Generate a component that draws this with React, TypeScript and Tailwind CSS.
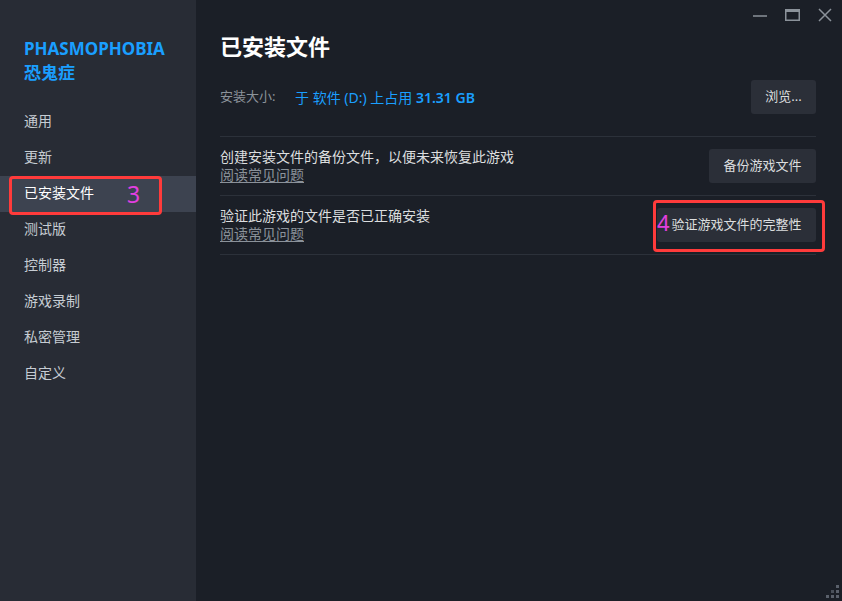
import React from 'react'

const navItems = ['通用', '更新', '已安装文件', '测试版', '控制器', '游戏录制', '私密管理', '自定义']

const font = { fontFamily: '"Noto Sans", "Noto Sans CJK SC", sans-serif' }

function FileRow({
  text,
  button,
  marker,
}: {
  text: string
  button: string
  marker?: boolean
}) {
  return (
    <div className="flex items-center justify-between border-b border-[#2c313a] h-[59px]">
      <div className="flex flex-col">
        <span className="text-[14px] leading-[18px] text-[#dcdedf]">{text}</span>
        <span className="text-[14px] leading-[18px] text-[#8b929a] underline underline-offset-2">
          阅读常见问题
        </span>
      </div>
      <div className="relative">
        <button className="h-[34px] px-[14.5px] rounded-[3px] bg-[#2b2f38] text-[13px] text-[#dcdedf]">
          {button}
        </button>
        {marker && (
          <>
            <div className="absolute -left-[4px] -top-[8px] w-[172px] h-[52px] border-[3px] border-[#ff3b3b] rounded-[4px]" />
            <span className="absolute left-0 top-[1px] text-[22px] leading-[26px] text-[#e23fe0]">4</span>
          </>
        )}
      </div>
    </div>
  )
}

export default function App() {
  return (
    <div className="flex w-[842px] h-[601px] bg-[#1b1f27] overflow-hidden" style={font}>
      {/* Sidebar */}
      <aside className="w-[196px] shrink-0 bg-[#282c35] pt-[37px]">
        <div className="px-6 text-[#1a9fff] font-bold text-[17px] leading-[24px]">
          <div>PHASMOPHOBIA</div>
          <div>恐鬼症</div>
        </div>
        <nav className="mt-[19px] flex flex-col">
          {navItems.map((item) => {
            const active = item === '已安装文件'
            return (
              <div
                key={item}
                className={`relative h-9 flex items-center px-6 text-[14px] leading-[18px] ${
                  active ? 'bg-[#3d4350] text-white' : 'text-[#c6ccd3]'
                }`}
              >
                <span className="-mt-[2px]">{item}</span>
                {active && (
                  <>
                    <div className="absolute left-[9px] top-0 w-[153px] h-[39px] border-[3px] border-[#ff3b3b] rounded-[4px]" />
                    <span className="absolute left-[127px] top-[5px] text-[23px] leading-[26px] text-[#e23fe0]">3</span>
                  </>
                )}
              </div>
            )
          })}
        </nav>
      </aside>

      {/* Main */}
      <main className="relative flex-1 flex flex-col pl-6 pr-[26px]">
        {/* window controls */}
        <div className="absolute top-[8px] right-[10px] flex items-center gap-[18px] text-[#8b929a]">
          <svg width="14" height="14" viewBox="0 0 14 14">
            <line x1="0" y1="8" x2="14" y2="8" stroke="currentColor" strokeWidth="1.5" />
          </svg>
          <svg width="15" height="14" viewBox="0 0 15 14">
            <rect x="0.75" y="1.75" width="13.5" height="10.5" fill="none" stroke="currentColor" strokeWidth="1.5" />
            <line x1="0" y1="3" x2="15" y2="3" stroke="currentColor" strokeWidth="2" />
          </svg>
          <svg width="14" height="14" viewBox="0 0 14 14">
            <path d="M1 1 L13 13 M13 1 L1 13" stroke="currentColor" strokeWidth="1.5" />
          </svg>
        </div>

        <h1 className="mt-[31px] text-[22px] leading-[30px] font-bold text-white">已安装文件</h1>

        <div className="mt-[19px] flex items-center justify-between pb-[22px] border-b border-[#2c313a]">
          <div className="flex items-center">
            <span className="text-[13px] text-[#8b929a] w-[75px]">安装大小:</span>
            <span className="text-[14px] text-[#1a9fff]">
              于 软件 (D:) 上占用 <span className="font-semibold">31.31 GB</span>
            </span>
          </div>
          <button className="h-[34px] w-[65px] rounded-[3px] bg-[#2b2f38] text-[13px] text-[#dcdedf]">
            浏览...
          </button>
        </div>

        <FileRow text="创建安装文件的备份文件，以便未来恢复此游戏" button="备份游戏文件" />
        <FileRow text="验证此游戏的文件是否已正确安装" button="验证游戏文件的完整性" marker />

        {/* resize grip */}
        <div className="absolute right-[3px] bottom-[3px] grid grid-cols-3 gap-[2px]">
          <span className="w-[3px] h-[3px]" />
          <span className="w-[3px] h-[3px]" />
          <span className="w-[3px] h-[3px] bg-[#5a606b]" />
          <span className="w-[3px] h-[3px]" />
          <span className="w-[3px] h-[3px] bg-[#4a505a]" />
          <span className="w-[3px] h-[3px] bg-[#5a606b]" />
          <span className="w-[3px] h-[3px] bg-[#5a606b]" />
          <span className="w-[3px] h-[3px] bg-[#5a606b]" />
          <span className="w-[3px] h-[3px] bg-[#5a606b]" />
        </div>
      </main>
    </div>
  )
}
